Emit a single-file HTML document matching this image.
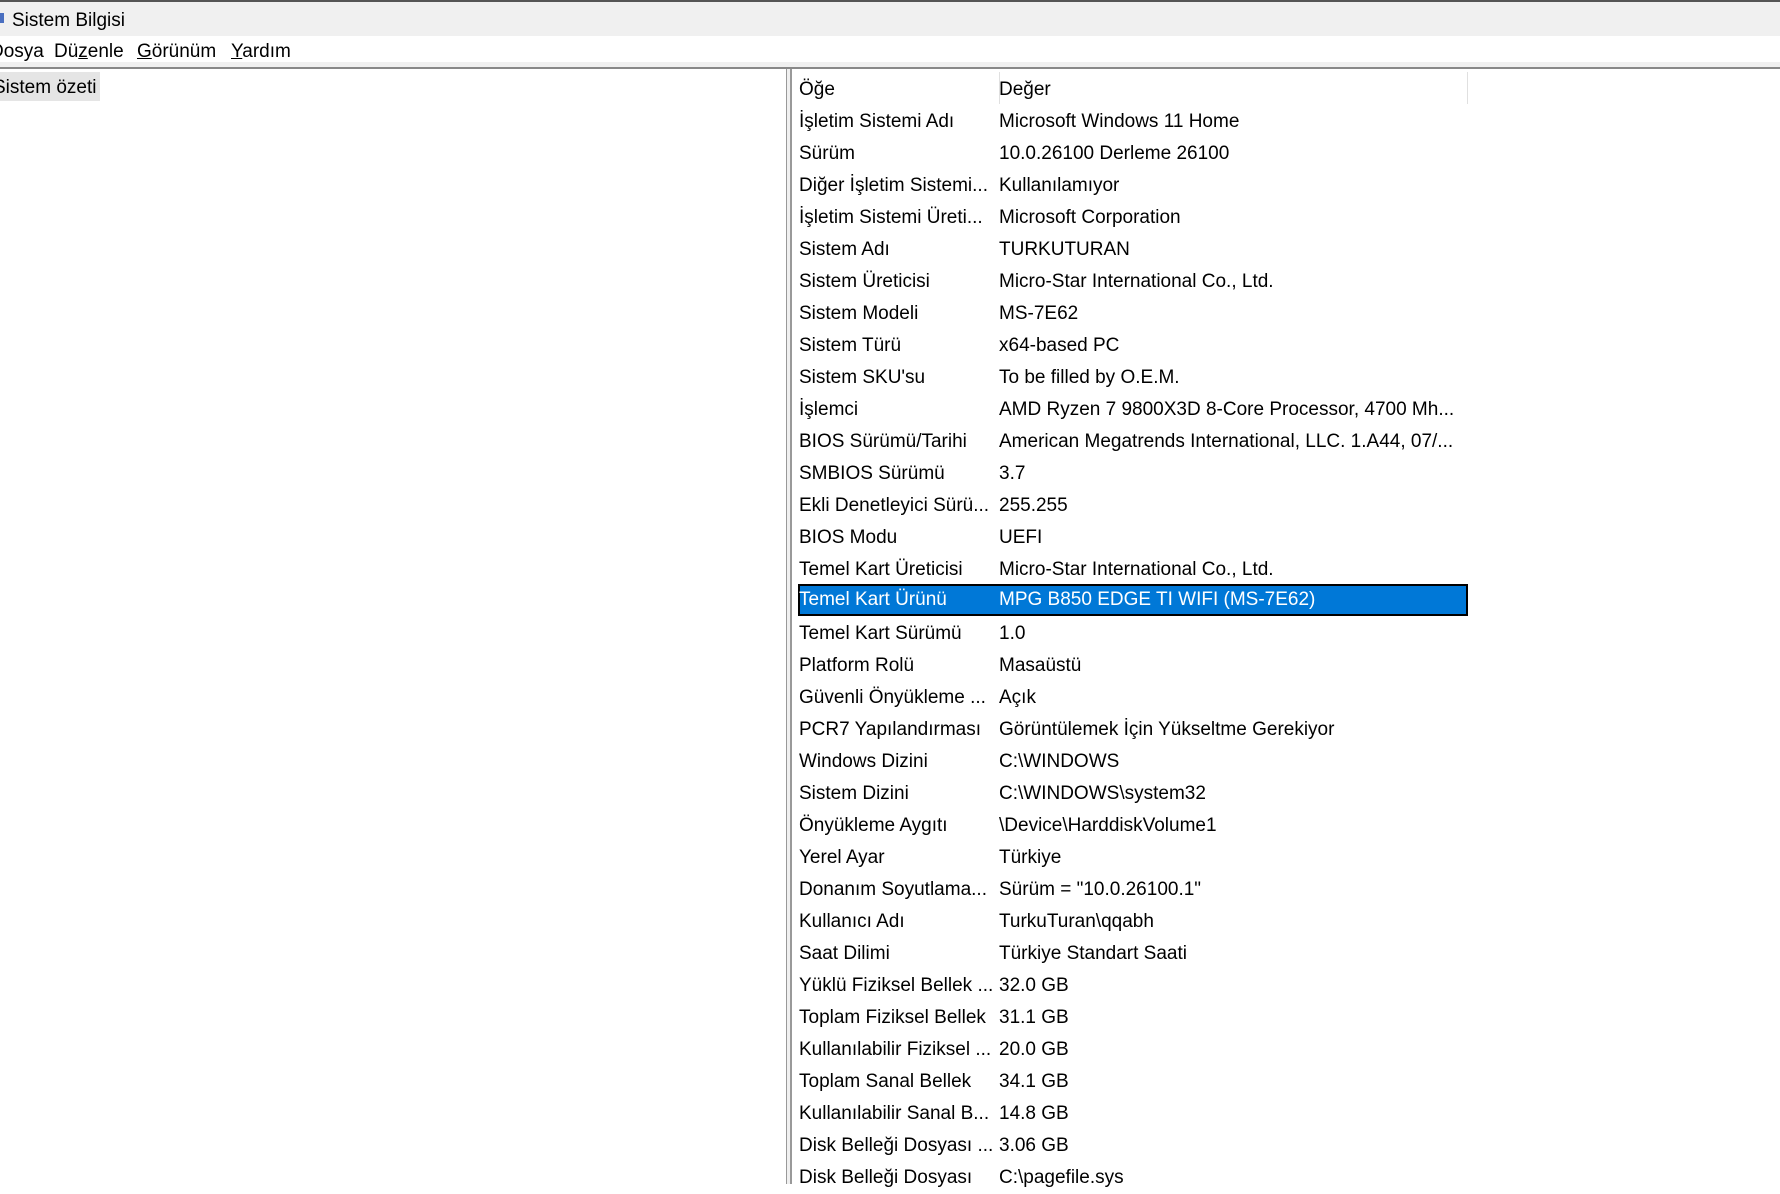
<!DOCTYPE html>
<html><head><meta charset="utf-8"><style>
*{margin:0;padding:0;box-sizing:border-box}
body{width:1780px;height:1184px;overflow:hidden;background:#fff;font-family:"Liberation Sans",sans-serif;color:#000;position:relative}
.title{position:absolute;left:0;top:0;width:1780px;height:36px;background:#f0f0f0;border-top:2px solid #555}
.title span{position:absolute;left:12px;top:8px;font-size:19px}
.icon{position:absolute;left:-4px;top:11px;width:8px;height:10px;background:#4a6fc0}
.menu{position:absolute;left:0;top:36px;width:1780px;height:26px;background:#fff;font-size:19px}
.menu span{position:absolute;top:5px}
.band{position:absolute;left:0;top:62px;width:1780px;height:7px;background:#f0f0f0;border-bottom:2px solid #888}
.left{position:absolute;left:0;top:69px;width:786px;height:1115px;background:#fff}
.sel{position:absolute;left:0;top:3px;width:100px;height:29px;background:#e5e5e5;font-size:19px;padding:5px 0 0 0;white-space:nowrap;overflow:hidden}
.sel span{margin-left:-7px}
.div{position:absolute;left:786px;top:69px;width:6px;height:1115px;background:#f0f0f0;border-left:1px solid #999;border-right:2px solid #999}
.right{position:absolute;left:792px;top:73px;width:988px;height:1111px;background:#fff}
.row{position:absolute;left:7px;height:32px;width:668px;font-size:19px;line-height:32px;white-space:nowrap}
.row .a{position:absolute;left:0;width:200px;overflow:hidden}
.row .b{position:absolute;left:200px;width:465px;overflow:hidden}
.hs{position:absolute;left:200px;top:-2px;width:1px;height:32px;background:#e0e0e0}
.hs2{position:absolute;left:668px;top:-2px;width:1px;height:32px;background:#e0e0e0}
.on{background:#0078d7;color:#fff;outline:2px solid #000;outline-offset:-2px}
</style></head><body>
<div class="title"><div class="icon"></div><span>Sistem Bilgisi</span></div>
<div class="menu"><span style="left:-10px">Dosya</span><span style="left:54px">Dü<u>z</u>enle</span><span style="left:137px"><u>G</u>örünüm</span><span style="left:231px"><u>Y</u>ardım</span></div>
<div class="band"></div>
<div class="left"><div class="sel"><span>Sistem özeti</span></div></div>
<div class="div"></div>
<div class="right">
<div class="row" style="top:1px"><span class="a">Öğe</span><span class="b">Değer</span><div class="hs"></div><div class="hs2"></div></div>
<div class="row" style="top:33px"><span class="a">İşletim Sistemi Adı</span><span class="b">Microsoft Windows 11 Home</span></div>
<div class="row" style="top:65px"><span class="a">Sürüm</span><span class="b">10.0.26100 Derleme 26100</span></div>
<div class="row" style="top:97px"><span class="a">Diğer İşletim Sistemi...</span><span class="b">Kullanılamıyor</span></div>
<div class="row" style="top:129px"><span class="a">İşletim Sistemi Üreti...</span><span class="b">Microsoft Corporation</span></div>
<div class="row" style="top:161px"><span class="a">Sistem Adı</span><span class="b">TURKUTURAN</span></div>
<div class="row" style="top:193px"><span class="a">Sistem Üreticisi</span><span class="b">Micro-Star International Co., Ltd.</span></div>
<div class="row" style="top:225px"><span class="a">Sistem Modeli</span><span class="b">MS-7E62</span></div>
<div class="row" style="top:257px"><span class="a">Sistem Türü</span><span class="b">x64-based PC</span></div>
<div class="row" style="top:289px"><span class="a">Sistem SKU'su</span><span class="b">To be filled by O.E.M.</span></div>
<div class="row" style="top:321px"><span class="a">İşlemci</span><span class="b">AMD Ryzen 7 9800X3D 8-Core Processor, 4700 Mh...</span></div>
<div class="row" style="top:353px"><span class="a">BIOS Sürümü/Tarihi</span><span class="b">American Megatrends International, LLC. 1.A44, 07/...</span></div>
<div class="row" style="top:385px"><span class="a">SMBIOS Sürümü</span><span class="b">3.7</span></div>
<div class="row" style="top:417px"><span class="a">Ekli Denetleyici Sürü...</span><span class="b">255.255</span></div>
<div class="row" style="top:449px"><span class="a">BIOS Modu</span><span class="b">UEFI</span></div>
<div class="row" style="top:481px"><span class="a">Temel Kart Üreticisi</span><span class="b">Micro-Star International Co., Ltd.</span></div>
<div class="row on" style="top:511px;left:6px;width:670px"><span class="a" style="left:1px">Temel Kart Ürünü</span><span class="b" style="left:201px">MPG B850 EDGE TI WIFI (MS-7E62)</span></div>
<div class="row" style="top:545px"><span class="a">Temel Kart Sürümü</span><span class="b">1.0</span></div>
<div class="row" style="top:577px"><span class="a">Platform Rolü</span><span class="b">Masaüstü</span></div>
<div class="row" style="top:609px"><span class="a">Güvenli Önyükleme ...</span><span class="b">Açık</span></div>
<div class="row" style="top:641px"><span class="a">PCR7 Yapılandırması</span><span class="b">Görüntülemek İçin Yükseltme Gerekiyor</span></div>
<div class="row" style="top:673px"><span class="a">Windows Dizini</span><span class="b">C:\WINDOWS</span></div>
<div class="row" style="top:705px"><span class="a">Sistem Dizini</span><span class="b">C:\WINDOWS\system32</span></div>
<div class="row" style="top:737px"><span class="a">Önyükleme Aygıtı</span><span class="b">\Device\HarddiskVolume1</span></div>
<div class="row" style="top:769px"><span class="a">Yerel Ayar</span><span class="b">Türkiye</span></div>
<div class="row" style="top:801px"><span class="a">Donanım Soyutlama...</span><span class="b">Sürüm = "10.0.26100.1"</span></div>
<div class="row" style="top:833px"><span class="a">Kullanıcı Adı</span><span class="b">TurkuTuran\qqabh</span></div>
<div class="row" style="top:865px"><span class="a">Saat Dilimi</span><span class="b">Türkiye Standart Saati</span></div>
<div class="row" style="top:897px"><span class="a">Yüklü Fiziksel Bellek ...</span><span class="b">32.0 GB</span></div>
<div class="row" style="top:929px"><span class="a">Toplam Fiziksel Bellek</span><span class="b">31.1 GB</span></div>
<div class="row" style="top:961px"><span class="a">Kullanılabilir Fiziksel ...</span><span class="b">20.0 GB</span></div>
<div class="row" style="top:993px"><span class="a">Toplam Sanal Bellek</span><span class="b">34.1 GB</span></div>
<div class="row" style="top:1025px"><span class="a">Kullanılabilir Sanal B...</span><span class="b">14.8 GB</span></div>
<div class="row" style="top:1057px"><span class="a">Disk Belleği Dosyası ...</span><span class="b">3.06 GB</span></div>
<div class="row" style="top:1089px"><span class="a">Disk Belleği Dosyası</span><span class="b">C:\pagefile.sys</span></div>
</div>
</body></html>
